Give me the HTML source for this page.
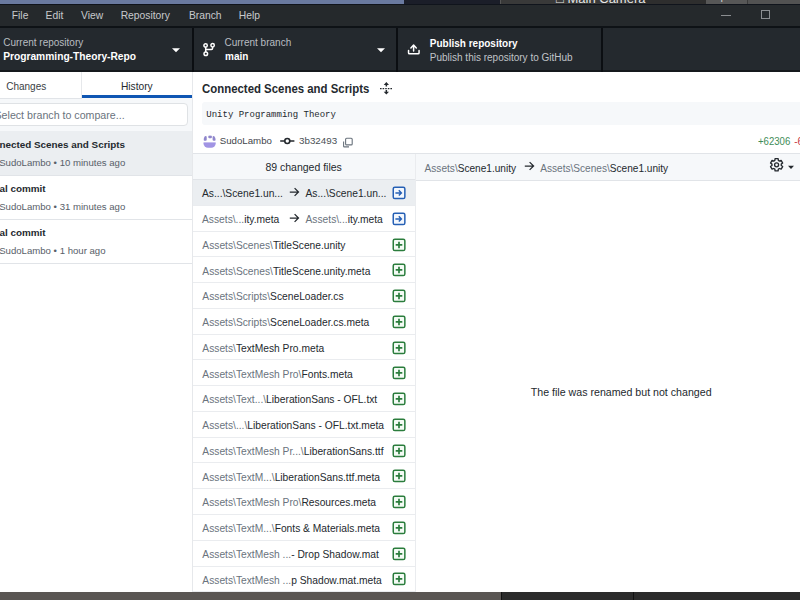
<!DOCTYPE html>
<html><head><meta charset="utf-8">
<style>
*{margin:0;padding:0;box-sizing:border-box}
html,body{width:800px;height:600px;overflow:hidden;background:#fff;font-family:"Liberation Sans",sans-serif}
.a{position:absolute;white-space:nowrap;line-height:1}
</style></head><body>
<div class="a" style="left:0px;top:0px;width:800px;height:4px;background:#202124"></div>
<div class="a" style="left:0px;top:0px;width:404px;height:3.5px;background:#6a7aa0"></div>
<div class="a" style="left:404px;top:0px;width:96px;height:3.5px;background:#1b1e29"></div>
<div class="a" style="left:500px;top:0px;width:1px;height:3.5px;background:#555"></div>
<div class="a" style="left:501px;top:0px;width:299px;height:3.5px;background:#393939"></div>
<div class="a" style="left:633px;top:0px;width:73px;height:3.5px;background:#2e2e2e"></div>
<div class="a" style="left:706px;top:0px;width:41px;height:3.5px;background:#575757"></div>
<div class="a" style="left:748px;top:0px;width:52px;height:3.5px;background:#525252"></div>
<div class="a" style="left:0;top:0;width:800px;height:3.5px;overflow:hidden"><div class="a" style="left:556px;top:-8.5px;font-size:13px;color:#e6e6e6">&#9633; Main Camera</div><div class="a" style="left:449px;top:-8px;font-size:10px;color:#ddd">V</div><div class="a" style="left:712px;top:-9.5px;font-size:11px;color:#cfcfcf">Open</div><div class="a" style="left:752px;top:-9.5px;font-size:11px;color:#cfcfcf">Execute</div></div>
<div class="a" style="left:0px;top:4px;width:800px;height:22px;background:#25292c"></div>
<div class="a" style="left:0px;top:25.8px;width:800px;height:2.2px;background:#0e1216"></div>
<div class="a" style="left:0px;top:3.5px;width:800px;height:1.2px;background:#10141c"></div>
<div class="a" style="left:11.80px;top:11.48px;font-size:10.3px;color:#c8cacc;">File</div>
<div class="a" style="left:45.60px;top:11.48px;font-size:10.3px;color:#c8cacc;">Edit</div>
<div class="a" style="left:81.00px;top:11.48px;font-size:10.3px;color:#c8cacc;">View</div>
<div class="a" style="left:120.70px;top:11.48px;font-size:10.3px;color:#c8cacc;">Repository</div>
<div class="a" style="left:188.90px;top:11.48px;font-size:10.3px;color:#c8cacc;">Branch</div>
<div class="a" style="left:238.80px;top:11.48px;font-size:10.3px;color:#c8cacc;">Help</div>
<div class="a" style="left:721px;top:14.5px;width:9.6px;height:1px;background:#8b8e91"></div>
<div class="a" style="left:761.2px;top:10.1px;width:8.7px;height:8.6px;border:1px solid #8b8e91"></div>
<div class="a" style="left:0px;top:28px;width:800px;height:43.5px;background:#24292e"></div>
<div class="a" style="left:0px;top:70px;width:800px;height:1.6px;background:#15191d"></div>
<div class="a" style="left:192px;top:28px;width:1.8px;height:43.5px;background:#0b0e12"></div>
<div class="a" style="left:396px;top:28px;width:1.8px;height:43.5px;background:#0b0e12"></div>
<div class="a" style="left:601px;top:28px;width:1.8px;height:43.5px;background:#0b0e12"></div>
<div class="a" style="left:3.20px;top:37.73px;font-size:10.0px;color:#b9bdc1;">Current repository</div>
<div class="a" style="left:3.20px;top:51.54px;font-size:10.23px;color:#ffffff;font-weight:bold;">Programming-Theory-Repo</div>
<svg class="a" style="left:171px;top:47px" width="10" height="7" viewBox="0 0 10 7"><path d="M1 1.2H9L5 5.3Z" fill="#fff"/></svg>
<div class="a" style="left:224.50px;top:38.14px;font-size:10.0px;color:#b9bdc1;">Current branch</div>
<div class="a" style="left:225.00px;top:51.73px;font-size:10.0px;color:#ffffff;font-weight:bold;">main</div>
<svg class="a" style="left:376px;top:47px" width="10" height="7" viewBox="0 0 10 7"><path d="M1 1.2H9L5 5.3Z" fill="#fff"/></svg>
<svg class="a" style="left:200px;top:40px" width="18" height="18" viewBox="0 0 18 18" fill="none" stroke="#fff" stroke-width="1.5"><circle cx="5.6" cy="5.4" r="1.7"/><circle cx="12.6" cy="5.3" r="1.7"/><circle cx="5.8" cy="13.8" r="1.8"/><path d="M5.7 7.1V12M12.6 7V8.2Q12.6 9.4 11.4 9.4H5.8"/></svg>
<svg class="a" style="left:402px;top:38px" width="24" height="24" viewBox="0 0 24 24" fill="none" stroke="#fff" stroke-width="1.5" stroke-linecap="round" stroke-linejoin="round"><path d="M11.6 7.2V13.0M8.9 9.9L11.6 7.1L14.3 9.9"/><path d="M6.55 12.6V14.9Q6.55 15.85 7.5 15.85H16.1Q17.05 15.85 17.05 14.9V12.6"/></svg>
<div class="a" style="left:429.80px;top:39.23px;font-size:10.0px;color:#ffffff;font-weight:bold;">Publish repository</div>
<div class="a" style="left:429.80px;top:52.83px;font-size:10.0px;color:#c0c4c8;">Publish this repository to GitHub</div>
<div class="a" style="left:0px;top:71.5px;width:192px;height:520px;background:#fff"></div>
<div class="a" style="left:192px;top:71.5px;width:1.3px;height:520px;background:#e6e8eb"></div>
<div class="a" style="left:80.6px;top:71.5px;width:1px;height:26px;background:#e6e8eb"></div>
<div class="a" style="left:6.20px;top:81.53px;font-size:10.0px;color:#393e44;">Changes</div>
<div class="a" style="left:121.00px;top:81.97px;font-size:10.2px;color:#24292e;">History</div>
<div class="a" style="left:81.9px;top:95px;width:110.1px;height:2.8px;background:#0f56b3"></div>
<div class="a" style="left:0px;top:97.7px;width:192px;height:33.3px;background:#f6f8fa"></div>
<div class="a" style="left:0px;top:97.7px;width:82px;height:0.8px;background:#e1e4e8"></div>
<div class="a" style="left:-10px;top:103.3px;width:197.5px;height:22.7px;background:#fff;border:1px solid #dfe2e5;border-radius:4px"></div>
<div class="a" style="left:-5.50px;top:109.58px;font-size:10.65px;color:#6a737d;">Select branch to compare...</div>
<div class="a" style="left:0px;top:131.0px;width:192px;height:44.1px;background:#ebeef1"></div>
<div class="a" style="left:-0.60px;top:139.82px;font-size:9.9px;color:#24292e;font-weight:bold;">nected Scenes and Scripts</div>
<div class="a" style="left:-0.80px;top:157.62px;font-size:9.6px;color:#586069;">SudoLambo • 10 minutes ago</div>
<div class="a" style="left:0px;top:174.6px;width:192px;height:1px;background:#e1e4e8"></div>
<div class="a" style="left:-0.60px;top:183.92px;font-size:9.9px;color:#24292e;font-weight:bold;">al commit</div>
<div class="a" style="left:-0.80px;top:201.72px;font-size:9.6px;color:#586069;">SudoLambo • 31 minutes ago</div>
<div class="a" style="left:0px;top:218.7px;width:192px;height:1px;background:#e1e4e8"></div>
<div class="a" style="left:-0.60px;top:228.02px;font-size:9.9px;color:#24292e;font-weight:bold;">al commit</div>
<div class="a" style="left:-0.80px;top:245.82px;font-size:9.6px;color:#586069;">SudoLambo • 1 hour ago</div>
<div class="a" style="left:0px;top:262.8px;width:192px;height:1px;background:#e1e4e8"></div>
<div class="a" style="left:202.00px;top:83.47px;font-size:12.2px;color:#24292e;font-weight:bold;transform:scaleX(0.936);transform-origin:0 0;">Connected Scenes and Scripts</div>
<svg class="a" style="left:378px;top:80px" width="16" height="16" viewBox="0 0 16 16" fill="#24292e"><path d="M8.35 2.1L11 4.9H9.1V6.6H7.6V4.9H5.7Z"/><path d="M8.35 14.6L11 11.8H9.1V10.1H7.6V11.8H5.7Z"/><path d="M2 7.9h1.6v1.4H2zM4.6 7.9h1.6v1.4H4.6zM7.2 7.9h1.6v1.4H7.2zM9.8 7.9h1.6v1.4H9.8zM12.4 7.9h1.6v1.4H12.4z"/></svg>
<div class="a" style="left:202.3px;top:102.4px;width:600px;height:22.4px;background:#f6f8fa;border-radius:3px"></div>
<div class="a" style="left:206.30px;top:111.40px;font-size:9.0px;color:#24292e;font-family:'Liberation Mono',monospace;">Unity Programming Theory</div>
<svg class="a" style="left:202.5px;top:134.5px" width="13" height="13" viewBox="0 0 13 13"><defs><clipPath id="av"><rect x="0.5" y="0.3" width="12.2" height="12.4" rx="4.5"/></clipPath></defs><g clip-path="url(#av)"><rect x="0" y="7.4" width="13" height="6" fill="#a194e4"/><rect x="0.5" y="1" width="3.2" height="4.8" rx="1" fill="#8f86cc"/><rect x="5.3" y="0.5" width="3.6" height="2.8" rx="1" fill="#8f86cc"/><rect x="9.6" y="1" width="3.2" height="4.8" rx="1" fill="#8f86cc"/></g></svg>
<div class="a" style="left:219.70px;top:136.49px;font-size:9.7px;color:#3f454b;">SudoLambo</div>
<svg class="a" style="left:279px;top:136px" width="17" height="10" viewBox="0 0 17 10" fill="none" stroke="#24292e" stroke-width="1.6"><circle cx="8.3" cy="5" r="2.5"/><path d="M1.2 5H5.8M10.8 5H15.4"/></svg>
<div class="a" style="left:299.00px;top:136.40px;font-size:9.8px;color:#4a5056;">3b32493</div>
<svg class="a" style="left:342px;top:137px" width="12" height="11" viewBox="0 0 12 11" fill="none" stroke="#6a737d" stroke-width="1.1"><rect x="3.6" y="1.3" width="6.6" height="6.6" rx="1"/><path d="M1.6 4.4V9.2Q1.6 9.9 2.3 9.9H7"/></svg>
<div class="a" style="left:757.50px;top:136.53px;font-size:10.0px;color:#3d8c56;transform:scaleX(0.96);transform-origin:0 0;">+62306</div>
<div class="a" style="left:794.20px;top:136.53px;font-size:10.0px;color:#c83a45;">-62306</div>
<div class="a" style="left:193px;top:153px;width:607px;height:1px;background:#e1e4e8"></div>
<div class="a" style="left:193px;top:154px;width:222px;height:25.2px;background:#f6f8fa"></div>
<div class="a" style="left:193px;top:179px;width:222px;height:0.8px;background:#e1e4e8"></div>
<div class="a" style="left:265.40px;top:162.11px;font-size:10.5px;color:#24292e;">89 changed files</div>
<div class="a" style="left:415px;top:154px;width:1px;height:438px;background:#eaecef"></div>
<div class="a" style="left:416px;top:154px;width:384px;height:26px;background:#f6f8fa"></div>
<div class="a" style="left:416px;top:180px;width:384px;height:0.8px;background:#e1e4e8"></div>
<div class="a" style="left:424.60px;top:163.75px;font-size:10.1px;color:#24292e;"><span style="color:#6a737d">Assets\</span>Scene1.unity</div>
<svg class="a" style="left:523.8px;top:160.5px" width="11" height="10" viewBox="0 0 11 10"><path d="M0.8 5H9.6M5.6 1.1L9.6 5L5.6 8.9" fill="none" stroke="#24292e" stroke-width="1.25"/></svg>
<div class="a" style="left:540.20px;top:163.75px;font-size:10.1px;color:#24292e;"><span style="color:#6a737d">Assets\Scenes\</span>Scene1.unity</div>
<svg class="a" style="left:768px;top:156px" width="18" height="18" viewBox="0 0 18 18" fill="none" stroke="#24292e" stroke-width="1.35" stroke-linejoin="round"><path d="M7.08 2.69 L10.12 2.69 L10.36 4.44 L11.49 5.10 L13.13 4.42 L14.66 7.06 L13.25 8.15 L13.25 9.45 L14.66 10.54 L13.13 13.18 L11.49 12.50 L10.36 13.16 L10.12 14.91 L7.08 14.91 L6.84 13.16 L5.71 12.50 L4.07 13.18 L2.54 10.54 L3.95 9.45 L3.95 8.15 L2.54 7.06 L4.07 4.42 L5.71 5.10 L6.84 4.44Z"/><circle cx="8.6" cy="8.8" r="2.0"/></svg>
<svg class="a" style="left:787px;top:165px" width="8" height="5" viewBox="0 0 8 5"><path d="M1 0.8H7L4 4Z" fill="#24292e"/></svg>
<div class="a" style="left:530.80px;top:386.79px;font-size:10.64px;color:#24292e;">The file was renamed but not changed</div>
<div class="a" style="left:193px;top:179.6px;width:222px;height:25.76px;background:#ebeef1"></div>
<div class="a" style="left:193px;top:204.85999999999999px;width:222px;height:1px;background:#eaecef"></div>
<div class="a" style="left:202.00px;top:189.22px;font-size:10.25px;color:#24292e;"><span style="color:#6a737d"></span>As...\Scene1.un...</div>
<svg class="a" style="left:289.2px;top:186.90px" width="11" height="10" viewBox="0 0 11 10"><path d="M0.8 5H9.4M5.6 1.1L9.5 5L5.6 8.9" fill="none" stroke="#24292e" stroke-width="1.25"/></svg>
<div class="a" style="left:305.50px;top:189.22px;font-size:10.25px;color:#24292e;"><span style="color:#6a737d"></span>As...\Scene1.un...</div>
<svg class="a" style="left:392.1px;top:186.00px" width="14" height="14" viewBox="0 0 14 14"><rect x="1.25" y="1.25" width="11.6" height="11.3" rx="1.6" fill="#f3f7fd" stroke="#2660b5" stroke-width="1.5"/><path d="M3.4 6.9H9.3M6.8 4.3L9.4 6.9L6.8 9.5" fill="none" stroke="#2660b5" stroke-width="1.45"/></svg>
<div class="a" style="left:193px;top:230.61999999999998px;width:222px;height:1px;background:#eaecef"></div>
<div class="a" style="left:202.00px;top:214.98px;font-size:10.25px;color:#24292e;"><span style="color:#6a737d">Assets\...</span>ity.meta</div>
<svg class="a" style="left:289.2px;top:212.66px" width="11" height="10" viewBox="0 0 11 10"><path d="M0.8 5H9.4M5.6 1.1L9.5 5L5.6 8.9" fill="none" stroke="#24292e" stroke-width="1.25"/></svg>
<div class="a" style="left:305.50px;top:214.98px;font-size:10.25px;color:#24292e;"><span style="color:#6a737d">Assets\...</span>ity.meta</div>
<svg class="a" style="left:392.1px;top:211.76px" width="14" height="14" viewBox="0 0 14 14"><rect x="1.25" y="1.25" width="11.6" height="11.3" rx="1.6" fill="#f3f7fd" stroke="#2660b5" stroke-width="1.5"/><path d="M3.4 6.9H9.3M6.8 4.3L9.4 6.9L6.8 9.5" fill="none" stroke="#2660b5" stroke-width="1.45"/></svg>
<div class="a" style="left:193px;top:256.38px;width:222px;height:1px;background:#eaecef"></div>
<div class="a" style="left:202.30px;top:240.74px;font-size:10.25px;color:#24292e;"><span style="color:#6a737d">Assets\Scenes\</span>TitleScene.unity</div>
<svg class="a" style="left:392.1px;top:237.52px" width="14" height="14" viewBox="0 0 14 14"><rect x="1.25" y="1.25" width="11.6" height="11.3" rx="1.6" fill="#f4fbf5" stroke="#2b7d3d" stroke-width="1.5"/><path d="M7 3.7V10.3M3.7 6.9H10.3" fill="none" stroke="#2b7d3d" stroke-width="1.7"/></svg>
<div class="a" style="left:193px;top:282.14px;width:222px;height:1px;background:#eaecef"></div>
<div class="a" style="left:202.30px;top:266.50px;font-size:10.25px;color:#24292e;"><span style="color:#6a737d">Assets\Scenes\</span>TitleScene.unity.meta</div>
<svg class="a" style="left:392.1px;top:263.28px" width="14" height="14" viewBox="0 0 14 14"><rect x="1.25" y="1.25" width="11.6" height="11.3" rx="1.6" fill="#f4fbf5" stroke="#2b7d3d" stroke-width="1.5"/><path d="M7 3.7V10.3M3.7 6.9H10.3" fill="none" stroke="#2b7d3d" stroke-width="1.7"/></svg>
<div class="a" style="left:193px;top:307.9px;width:222px;height:1px;background:#eaecef"></div>
<div class="a" style="left:202.30px;top:292.26px;font-size:10.25px;color:#24292e;"><span style="color:#6a737d">Assets\Scripts\</span>SceneLoader.cs</div>
<svg class="a" style="left:392.1px;top:289.04px" width="14" height="14" viewBox="0 0 14 14"><rect x="1.25" y="1.25" width="11.6" height="11.3" rx="1.6" fill="#f4fbf5" stroke="#2b7d3d" stroke-width="1.5"/><path d="M7 3.7V10.3M3.7 6.9H10.3" fill="none" stroke="#2b7d3d" stroke-width="1.7"/></svg>
<div class="a" style="left:193px;top:333.65999999999997px;width:222px;height:1px;background:#eaecef"></div>
<div class="a" style="left:202.30px;top:318.02px;font-size:10.25px;color:#24292e;"><span style="color:#6a737d">Assets\Scripts\</span>SceneLoader.cs.meta</div>
<svg class="a" style="left:392.1px;top:314.80px" width="14" height="14" viewBox="0 0 14 14"><rect x="1.25" y="1.25" width="11.6" height="11.3" rx="1.6" fill="#f4fbf5" stroke="#2b7d3d" stroke-width="1.5"/><path d="M7 3.7V10.3M3.7 6.9H10.3" fill="none" stroke="#2b7d3d" stroke-width="1.7"/></svg>
<div class="a" style="left:193px;top:359.41999999999996px;width:222px;height:1px;background:#eaecef"></div>
<div class="a" style="left:202.30px;top:343.78px;font-size:10.25px;color:#24292e;"><span style="color:#6a737d">Assets\</span>TextMesh Pro.meta</div>
<svg class="a" style="left:392.1px;top:340.56px" width="14" height="14" viewBox="0 0 14 14"><rect x="1.25" y="1.25" width="11.6" height="11.3" rx="1.6" fill="#f4fbf5" stroke="#2b7d3d" stroke-width="1.5"/><path d="M7 3.7V10.3M3.7 6.9H10.3" fill="none" stroke="#2b7d3d" stroke-width="1.7"/></svg>
<div class="a" style="left:193px;top:385.18px;width:222px;height:1px;background:#eaecef"></div>
<div class="a" style="left:202.30px;top:369.54px;font-size:10.25px;color:#24292e;"><span style="color:#6a737d">Assets\TextMesh Pro\</span>Fonts.meta</div>
<svg class="a" style="left:392.1px;top:366.32px" width="14" height="14" viewBox="0 0 14 14"><rect x="1.25" y="1.25" width="11.6" height="11.3" rx="1.6" fill="#f4fbf5" stroke="#2b7d3d" stroke-width="1.5"/><path d="M7 3.7V10.3M3.7 6.9H10.3" fill="none" stroke="#2b7d3d" stroke-width="1.7"/></svg>
<div class="a" style="left:193px;top:410.94px;width:222px;height:1px;background:#eaecef"></div>
<div class="a" style="left:202.30px;top:395.30px;font-size:10.25px;color:#24292e;"><span style="color:#6a737d">Assets\Text...\</span>LiberationSans - OFL.txt</div>
<svg class="a" style="left:392.1px;top:392.08px" width="14" height="14" viewBox="0 0 14 14"><rect x="1.25" y="1.25" width="11.6" height="11.3" rx="1.6" fill="#f4fbf5" stroke="#2b7d3d" stroke-width="1.5"/><path d="M7 3.7V10.3M3.7 6.9H10.3" fill="none" stroke="#2b7d3d" stroke-width="1.7"/></svg>
<div class="a" style="left:193px;top:436.7px;width:222px;height:1px;background:#eaecef"></div>
<div class="a" style="left:202.30px;top:421.06px;font-size:10.25px;color:#24292e;"><span style="color:#6a737d">Assets\...\</span>LiberationSans - OFL.txt.meta</div>
<svg class="a" style="left:392.1px;top:417.84px" width="14" height="14" viewBox="0 0 14 14"><rect x="1.25" y="1.25" width="11.6" height="11.3" rx="1.6" fill="#f4fbf5" stroke="#2b7d3d" stroke-width="1.5"/><path d="M7 3.7V10.3M3.7 6.9H10.3" fill="none" stroke="#2b7d3d" stroke-width="1.7"/></svg>
<div class="a" style="left:193px;top:462.46000000000004px;width:222px;height:1px;background:#eaecef"></div>
<div class="a" style="left:202.30px;top:446.82px;font-size:10.25px;color:#24292e;"><span style="color:#6a737d">Assets\TextMesh Pr...\</span>LiberationSans.ttf</div>
<svg class="a" style="left:392.1px;top:443.60px" width="14" height="14" viewBox="0 0 14 14"><rect x="1.25" y="1.25" width="11.6" height="11.3" rx="1.6" fill="#f4fbf5" stroke="#2b7d3d" stroke-width="1.5"/><path d="M7 3.7V10.3M3.7 6.9H10.3" fill="none" stroke="#2b7d3d" stroke-width="1.7"/></svg>
<div class="a" style="left:193px;top:488.22px;width:222px;height:1px;background:#eaecef"></div>
<div class="a" style="left:202.30px;top:472.58px;font-size:10.25px;color:#24292e;"><span style="color:#6a737d">Assets\TextM...\</span>LiberationSans.ttf.meta</div>
<svg class="a" style="left:392.1px;top:469.36px" width="14" height="14" viewBox="0 0 14 14"><rect x="1.25" y="1.25" width="11.6" height="11.3" rx="1.6" fill="#f4fbf5" stroke="#2b7d3d" stroke-width="1.5"/><path d="M7 3.7V10.3M3.7 6.9H10.3" fill="none" stroke="#2b7d3d" stroke-width="1.7"/></svg>
<div class="a" style="left:193px;top:513.98px;width:222px;height:1px;background:#eaecef"></div>
<div class="a" style="left:202.30px;top:498.34px;font-size:10.25px;color:#24292e;"><span style="color:#6a737d">Assets\TextMesh Pro\</span>Resources.meta</div>
<svg class="a" style="left:392.1px;top:495.12px" width="14" height="14" viewBox="0 0 14 14"><rect x="1.25" y="1.25" width="11.6" height="11.3" rx="1.6" fill="#f4fbf5" stroke="#2b7d3d" stroke-width="1.5"/><path d="M7 3.7V10.3M3.7 6.9H10.3" fill="none" stroke="#2b7d3d" stroke-width="1.7"/></svg>
<div class="a" style="left:193px;top:539.74px;width:222px;height:1px;background:#eaecef"></div>
<div class="a" style="left:202.30px;top:524.10px;font-size:10.25px;color:#24292e;"><span style="color:#6a737d">Assets\TextM...\</span>Fonts &amp; Materials.meta</div>
<svg class="a" style="left:392.1px;top:520.88px" width="14" height="14" viewBox="0 0 14 14"><rect x="1.25" y="1.25" width="11.6" height="11.3" rx="1.6" fill="#f4fbf5" stroke="#2b7d3d" stroke-width="1.5"/><path d="M7 3.7V10.3M3.7 6.9H10.3" fill="none" stroke="#2b7d3d" stroke-width="1.7"/></svg>
<div class="a" style="left:193px;top:565.5px;width:222px;height:1px;background:#eaecef"></div>
<div class="a" style="left:202.30px;top:549.86px;font-size:10.25px;color:#24292e;"><span style="color:#6a737d">Assets\TextMesh ...</span>- Drop Shadow.mat</div>
<svg class="a" style="left:392.1px;top:546.64px" width="14" height="14" viewBox="0 0 14 14"><rect x="1.25" y="1.25" width="11.6" height="11.3" rx="1.6" fill="#f4fbf5" stroke="#2b7d3d" stroke-width="1.5"/><path d="M7 3.7V10.3M3.7 6.9H10.3" fill="none" stroke="#2b7d3d" stroke-width="1.7"/></svg>
<div class="a" style="left:193px;top:591.26px;width:222px;height:1px;background:#eaecef"></div>
<div class="a" style="left:202.30px;top:575.62px;font-size:10.25px;color:#24292e;"><span style="color:#6a737d">Assets\TextMesh ...</span>p Shadow.mat.meta</div>
<svg class="a" style="left:392.1px;top:572.40px" width="14" height="14" viewBox="0 0 14 14"><rect x="1.25" y="1.25" width="11.6" height="11.3" rx="1.6" fill="#f4fbf5" stroke="#2b7d3d" stroke-width="1.5"/><path d="M7 3.7V10.3M3.7 6.9H10.3" fill="none" stroke="#2b7d3d" stroke-width="1.7"/></svg>
<div class="a" style="left:0px;top:591.5px;width:800px;height:8.5px;background:#5a5653"></div>
<div class="a" style="left:501px;top:591.5px;width:299px;height:8.5px;background:#2b2b2b"></div>
<div class="a" style="left:501px;top:591.5px;width:1.2px;height:8.5px;background:#111"></div>
<div class="a" style="left:633px;top:591.5px;width:1.2px;height:8.5px;background:#111"></div>
</body></html>
